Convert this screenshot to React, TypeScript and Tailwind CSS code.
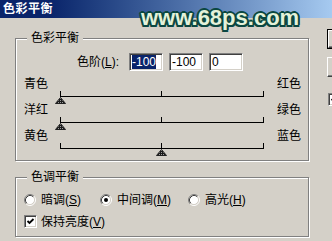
import React from 'react'

const SUNKEN =
  'border border-t-[#808080] border-l-[#808080] border-r-white border-b-white shadow-[inset_1px_1px_0_#404040,inset_-1px_-1px_0_#d4d0c8]'
const RAISED =
  'border border-t-white border-l-white border-r-[#404040] border-b-[#404040] shadow-[inset_-1px_-1px_0_#808080] bg-[#d4d0c8]'
const GROUP =
  'border border-[#808080] shadow-[inset_1px_1px_0_#fff,1px_1px_0_#fff] m-0 p-0 min-w-0'

function Thumb() {
  return (
    <svg width="11" height="7" viewBox="0 0 11 7">
      <defs>
        <pattern id="hatch" width="2" height="2" patternUnits="userSpaceOnUse">
          <rect width="2" height="2" fill="#1a1a1a" />
          <rect x="1" y="1" width="1" height="1" fill="#9a9a9a" />
        </pattern>
      </defs>
      <polygon points="5.5,0.5 0.5,6.5 10.5,6.5" fill="url(#hatch)" stroke="#202020" strokeWidth="1" />
    </svg>
  )
}

// one slider: label row + track with ticks and the triangle thumb
function SliderRow({ left, right, pos }: { left: string; right: string; pos: number }) {
  return (
    <div>
      <div className="flex justify-between pl-[8px] pr-[7px] h-[12px] leading-[12px]">
        <span>{left}</span>
        <span>{right}</span>
      </div>
      <div className="relative ml-[44px] mt-[1px] w-[204px] h-[6px] border-b border-black">
        <div className="absolute left-0 top-0 h-full w-px bg-black" />
        <div className="absolute left-[101px] top-0 h-full w-px bg-black" />
        <div className="absolute right-0 top-0 h-full w-px bg-black" />
        <div className="absolute top-[6px]" style={{ left: pos - 5 }}>
          <Thumb />
        </div>
      </div>
    </div>
  )
}

function Radio({ checked }: { checked?: boolean }) {
  return (
    <svg width="12" height="12" viewBox="0 0 12 12" className="shrink-0">
      <circle cx="6" cy="6" r="4.5" fill="#fff" />
      <path d="M2.11 9.89 A5.5 5.5 0 0 1 9.89 2.11" fill="none" stroke="#808080" />
      <path d="M9.89 2.11 A5.5 5.5 0 0 1 2.11 9.89" fill="none" stroke="#fff" />
      <path d="M2.82 9.18 A4.5 4.5 0 0 1 9.18 2.82" fill="none" stroke="#404040" />
      <path d="M9.18 2.82 A4.5 4.5 0 0 1 2.82 9.18" fill="none" stroke="#d4d0c8" />
      {checked && <circle cx="6" cy="6" r="2" fill="#000" />}
    </svg>
  )
}

function Check() {
  return (
    <div className={`w-[13px] h-[13px] bg-white shrink-0 flex items-center justify-center ${SUNKEN}`}>
      <svg width="9" height="9" viewBox="0 0 9 9">
        <polyline points="1.5,4 3.5,6 7.5,2" fill="none" stroke="#000" strokeWidth="1.8" />
      </svg>
    </div>
  )
}

function Field({ value, selected }: { value: string; selected?: boolean }) {
  return (
    <div className={`w-[34px] h-[18px] bg-white flex items-center pl-[2px] leading-[14px] ${SUNKEN}`}>
      {selected ? <span className="bg-[#0a246a] text-white">{value}</span> : <span>{value}</span>}
    </div>
  )
}

export default function App() {
  return (
    <div className="relative w-[332px] h-[241px] overflow-hidden bg-[#d4d0c8] text-[12px] text-black font-['Liberation_Sans','Noto_Sans_CJK_SC',sans-serif]">
      {/* title bar */}
      <div className="h-[18px] flex items-center pl-[3px] bg-linear-to-r from-[#0a246a] from-[15%] to-[#a6caf0]">
        <span className="text-white font-bold leading-[14px] tracking-[0.5px]">色彩平衡</span>
      </div>

      {/* watermark */}
      <div className="absolute left-[141px] top-[7px] text-[22px] leading-[22px] font-bold text-[#e4f2da] [text-shadow:2px_0_0_#0b4741,-2px_0_0_#0b4741,0_2px_0_#0b4741,0_-2px_0_#0b4741,1.5px_1.5px_0_#0b4741,-1.5px_-1.5px_0_#0b4741,1.5px_-1.5px_0_#0b4741,-1.5px_1.5px_0_#0b4741]">
        www.68ps.com
      </div>

      <div className="flex pl-[15px] pt-[13px]">
        <div className="w-[294px] shrink-0">
          {/* color balance group */}
          <fieldset className={`${GROUP} h-[130px]`}>
            <legend className="ml-[11px] px-[4px] leading-[14px] bg-[#d4d0c8]">色彩平衡</legend>
            <div className="flex items-center mt-[8px] pl-[61px]">
              <span className="w-[46px] whitespace-nowrap">
                色阶(<u>L</u>):
              </span>
              <div className="flex gap-[6px] ml-[6px]">
                <Field value="-100" selected />
                <Field value="-100" />
                <Field value="0" />
              </div>
            </div>
            <div className="mt-[7px] flex flex-col gap-[7px]">
              <SliderRow left="青色" right="红色" pos={0} />
              <SliderRow left="洋红" right="绿色" pos={0} />
              <SliderRow left="黄色" right="蓝色" pos={101} />
            </div>
          </fieldset>

          {/* tone balance group */}
          <fieldset className={`${GROUP} h-[67px] mt-[9px]`}>
            <legend className="ml-[11px] px-[4px] leading-[14px] bg-[#d4d0c8]">色调平衡</legend>
            <div className="flex items-center mt-[10px] pl-[8px] h-[12px] leading-[12px]">
              <div className="w-[76px] flex items-center gap-[5px]">
                <Radio />
                <span>
                  暗调(<u>S</u>)
                </span>
              </div>
              <div className="w-[88px] flex items-center gap-[5px]">
                <Radio checked />
                <span>
                  中间调(<u>M</u>)
                </span>
              </div>
              <div className="flex items-center gap-[5px]">
                <Radio />
                <span>
                  高光(<u>H</u>)
                </span>
              </div>
            </div>
            <div className="flex items-center gap-[4px] mt-[9px] pl-[8px] leading-[12px]">
              <Check />
              <span>
                保持亮度(<u>V</u>)
              </span>
            </div>
          </fieldset>
        </div>

        {/* dialog buttons, cut off by the window edge */}
        <div className="ml-[18px] w-[75px] shrink-0 flex flex-col">
          <div className="mt-[-2px] h-[20px] border border-black">
            <div className={`h-full ${RAISED}`} />
          </div>
          <div className={`mt-[8px] h-[20px] ${RAISED}`} />
          <div className="mt-[16px] pl-[1px]">
            <Check />
          </div>
        </div>
      </div>
    </div>
  )
}
